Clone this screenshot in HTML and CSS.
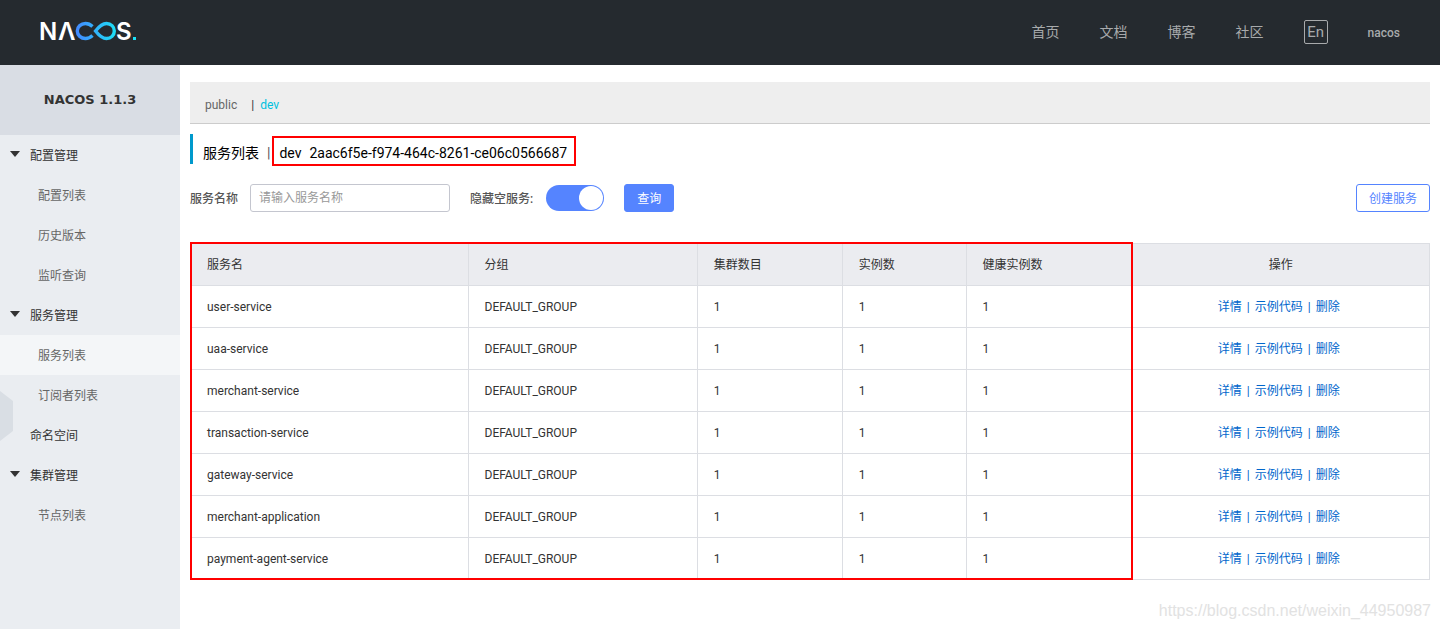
FILE: index.html
```html
<!DOCTYPE html>
<html lang="zh-CN">
<head>
<meta charset="utf-8">
<title>Nacos</title>
<link rel="stylesheet" href="styles.css">
</head>
<body>
<header class="header">
  <a class="logo" href="#" aria-label="Nacos">
    <svg width="102" height="34" viewBox="-2 -6 102 34">
      <defs>
        <linearGradient id="brand" gradientUnits="userSpaceOnUse" x1="36" y1="0" x2="77" y2="0">
          <stop offset="0" stop-color="#4489ff"/>
          <stop offset="1" stop-color="#1be1f6"/>
        </linearGradient>
      </defs>
      <text class="logo-text" x="-1" y="20">N</text>
      <text class="logo-text" x="18" y="20">Λ</text>
      <path d="M52.5 6.5C50.500 4.600 48.200 3.500 45.500 3.500C41 3.500 37.300 6.700 37.300 11C37.300 15.300 41 18.500 45.500 18.500C48.200 18.500 50.500 17.400 52.500 15.500" fill="none" stroke="url(#brand)" stroke-width="3.400"/>
      <path d="M55.500 11C59 6.500 62 3.500 66.500 3.500C71 3.500 74.300 6.700 74.300 11C74.300 15.300 71 18.500 66.500 18.500C62 18.500 59 15.500 55.500 11Z" fill="none" stroke="url(#brand)" stroke-width="3.400"/>
      <text class="logo-text" x="76" y="20">S</text>
      <rect x="93" y="17" width="3" height="3" fill="#1be1f6"/>
    </svg>
  </a>
  <nav class="nav">
    <a href="#">首页</a>
    <a href="#">文档</a>
    <a href="#">博客</a>
    <a href="#">社区</a>
    <button class="lang" type="button">En</button>
    <a class="user" href="#">nacos</a>
  </nav>
</header>
<div class="layout">
  <aside class="sidebar">
    <div class="version">NACOS 1.1.3</div>
    <nav class="menu">
      <a class="group arrow" href="#">配置管理</a>
      <a class="item" href="#">配置列表</a>
      <a class="item" href="#">历史版本</a>
      <a class="item" href="#">监听查询</a>
      <a class="group arrow" href="#">服务管理</a>
      <a class="item active" href="#">服务列表</a>
      <a class="item" href="#">订阅者列表</a>
      <a class="group" href="#">命名空间</a>
      <a class="group arrow" href="#">集群管理</a>
      <a class="item" href="#">节点列表</a>
    </nav>
    <button class="handle" type="button" aria-label="收起"></button>
  </aside>
  <main class="main">
    <div class="namespaces">
      <a href="#">public</a>
      <span class="bar">|</span>
      <a class="current" href="#">dev</a>
    </div>
    <h1 class="title">
      <span>服务列表</span>
      <span class="bar">|</span>
      <span class="marked"><span>dev</span><span>2aac6f5e-f974-464c-8261-ce06c0566687</span></span>
    </h1>
    <form class="toolbar">
      <label for="name">服务名称</label>
      <input class="field" id="name" type="text" placeholder="请输入服务名称">
      <label for="hide">隐藏空服务:</label>
      <input class="switch" id="hide" type="checkbox" checked>
      <button class="btn primary" type="button">查询</button>
      <button class="btn create" type="button">创建服务</button>
    </form>
    <div class="table-wrap">
      <table class="table">
        <colgroup><col class="c1"><col class="c2"><col class="c3"><col class="c4"><col class="c5"><col class="c6"></colgroup>
        <thead>
          <tr><th>服务名</th><th>分组</th><th>集群数目</th><th>实例数</th><th>健康实例数</th><th>操作</th></tr>
        </thead>
        <tbody>
          <tr><td>user-service</td><td>DEFAULT_GROUP</td><td>1</td><td>1</td><td>1</td><td><a href="#">详情</a><i>|</i><a href="#">示例代码</a><i>|</i><a href="#">删除</a></td></tr>
          <tr><td>uaa-service</td><td>DEFAULT_GROUP</td><td>1</td><td>1</td><td>1</td><td><a href="#">详情</a><i>|</i><a href="#">示例代码</a><i>|</i><a href="#">删除</a></td></tr>
          <tr><td>merchant-service</td><td>DEFAULT_GROUP</td><td>1</td><td>1</td><td>1</td><td><a href="#">详情</a><i>|</i><a href="#">示例代码</a><i>|</i><a href="#">删除</a></td></tr>
          <tr><td>transaction-service</td><td>DEFAULT_GROUP</td><td>1</td><td>1</td><td>1</td><td><a href="#">详情</a><i>|</i><a href="#">示例代码</a><i>|</i><a href="#">删除</a></td></tr>
          <tr><td>gateway-service</td><td>DEFAULT_GROUP</td><td>1</td><td>1</td><td>1</td><td><a href="#">详情</a><i>|</i><a href="#">示例代码</a><i>|</i><a href="#">删除</a></td></tr>
          <tr><td>merchant-application</td><td>DEFAULT_GROUP</td><td>1</td><td>1</td><td>1</td><td><a href="#">详情</a><i>|</i><a href="#">示例代码</a><i>|</i><a href="#">删除</a></td></tr>
          <tr><td>payment-agent-service</td><td>DEFAULT_GROUP</td><td>1</td><td>1</td><td>1</td><td><a href="#">详情</a><i>|</i><a href="#">示例代码</a><i>|</i><a href="#">删除</a></td></tr>
        </tbody>
      </table>
    </div>
    <div class="watermark">https://blog.csdn.net/weixin_44950987</div>
  </main>
</div>
</body>
</html>
```
FILE: styles.css
```css
* { box-sizing: border-box; }

body {
  display: flex;
  flex-direction: column;
  min-height: 100vh;
  margin: 0;
  background: #fff;
  color: #333;
  font: 12px/18px Roboto, "Noto Sans CJK SC", sans-serif;
}

a { color: inherit; text-decoration: none; }
button, input { margin: 0; font: inherit; }

/* Header */
.header {
  display: flex;
  align-items: center;
  justify-content: space-between;
  height: 65px;
  padding: 0 40px 0 38px;
  background: #252a2f;
}
.logo { display: flex; padding-bottom: 3px; }
.logo-text { fill: #fff; font: 600 24px Inter, sans-serif; }
.nav {
  display: flex;
  align-items: center;
  gap: 40px;
  padding-bottom: 2px;
  color: #a8aaac;
  font-size: 14px;
}
.nav .user { padding-top: 2px; font-size: 12px; font-weight: 500; }
.lang {
  width: 24px;
  height: 24px;
  padding: 0;
  border: 1px solid #a8aaac;
  border-radius: 2px;
  background: none;
  color: inherit;
  font-size: 15px;
  line-height: 20px;
}

/* Sidebar */
.layout { display: flex; flex: 1; }
.sidebar {
  position: relative;
  flex: none;
  width: 180px;
  background: #eaedf1;
}
.version {
  height: 70px;
  background: #d9dde4;
  font: 700 13px/70px "DejaVu Sans", sans-serif;
  text-align: center;
}
.menu a {
  display: flex;
  align-items: center;
  height: 40px;
  padding: 2px 0 0 30px;
}
.menu .item { padding-left: 38px; color: #666; }
.menu .active { background: #f4f6f8; }
.menu .arrow { padding-left: 10px; gap: 10px; }
.arrow::before {
  content: "";
  width: 10px;
  height: 6px;
  margin-bottom: 4px;
  background: #333;
  clip-path: polygon(0 0, 100% 0, 50% 100%);
}
.handle {
  position: absolute;
  top: 326px;
  left: 0;
  width: 13px;
  height: 50px;
  padding: 0;
  border: 0;
  background: #d9dee4;
  clip-path: polygon(0 0, 100% 20%, 100% 80%, 0 100%);
}

/* Content */
.main {
  position: relative;
  flex: 1;
  min-width: 0;
  padding: 17px 10px 10px;
}
.namespaces {
  display: flex;
  align-items: center;
  height: 42px;
  padding: 4px 15px 0;
  border-bottom: 1px solid #ccc;
  background: #eee;
  color: #666;
}
.namespaces .bar { margin: 0 6px 0 14px; color: #333; }
.namespaces .current { color: #00c1de; }
.title {
  display: flex;
  align-items: center;
  height: 30px;
  margin: 10px 0 20px;
  padding: 8px 0 0 10px;
  border-left: 3px solid #09c;
  color: #000;
  font-size: 14px;
  font-weight: 400;
}
.title .bar { margin: 0 9px 0 8px; color: #555; }
.marked { position: relative; display: flex; gap: 8px; }
.marked::after {
  content: "";
  position: absolute;
  inset: -8px -9px -4px -7px;
  border: 2px solid #f00;
}
.toolbar {
  display: flex;
  align-items: center;
  margin-bottom: 31px;
}
.toolbar label { padding-top: 2px; color: #555; font-weight: 500; }
.field {
  width: 200px;
  height: 28px;
  margin: 0 20px 0 12px;
  padding: 0 8px;
  border: 1px solid #c4c6cf;
  border-radius: 3px;
  background: #fff;
  color: #333;
}
.field::placeholder { color: #999; }
.switch {
  display: flex;
  justify-content: flex-end;
  width: 58px;
  height: 26px;
  margin: 0 20px 0 13px;
  padding: 1px;
  border-radius: 13px;
  background: #5584ff;
  appearance: none;
}
.switch::before {
  content: "";
  width: 24px;
  height: 24px;
  border-radius: 50%;
  background: #fff;
}
.btn {
  height: 28px;
  padding: 2px 12px 0;
  border: 1px solid #5584ff;
  border-radius: 3px;
  line-height: 18px;
}
.primary { background: #5584ff; color: #fff; }
.create { margin-left: auto; background: #fff; color: #5584ff; }

/* Table */
.table-wrap { position: relative; }
.table-wrap::after {
  content: "";
  position: absolute;
  inset: -1px 23.95% 0 0;
  border: 2px solid #f00;
  pointer-events: none;
}
.table {
  width: 100%;
  border-collapse: collapse;
  table-layout: fixed;
}
.c1 { width: 22.4%; }
.c2 { width: 18.5%; }
.c3 { width: 11.7%; }
.c4 { width: 10%; }
.c5 { width: 13.4%; }
.c6 { width: 24%; }
.table th, .table td {
  height: 42px;
  padding: 0 16px;
  border: 1px solid #dcdee3;
  font-weight: 400;
  text-align: left;
}
.table th { background: #ebecf0; }
.table th:last-child, .table td:last-child { text-align: center; }
.table td:last-child { padding-right: 20px; }
.table td a { color: #06c; }
.table i { margin: 0 5px; color: #06c; font-style: normal; }

.watermark {
  position: absolute;
  right: 9px;
  bottom: 9px;
  color: #e2e2e2;
  font: 16px/18px "Liberation Sans", sans-serif;
}
```
